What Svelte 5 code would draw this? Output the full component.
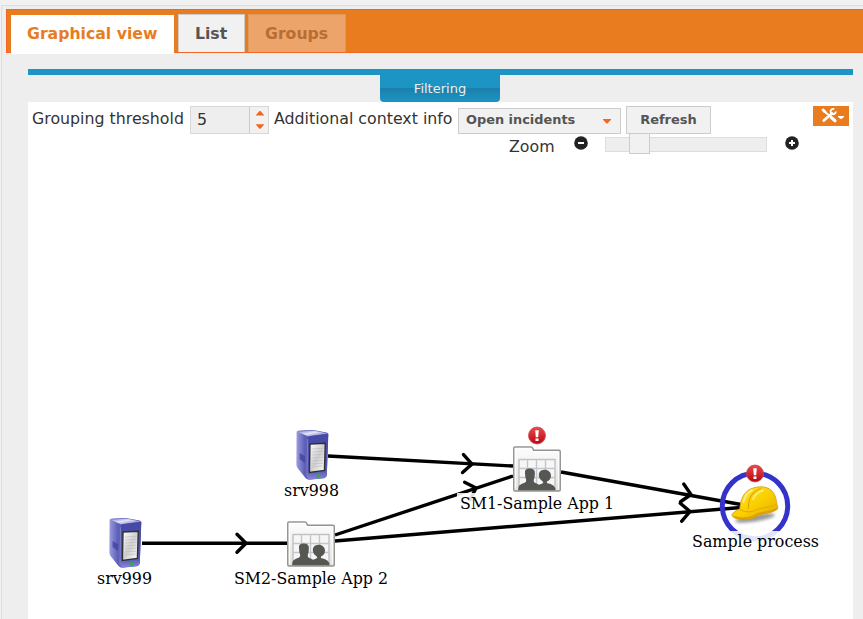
<script>
  const edges = [
    { d: 'M328 456 L513 466', tip: [472, 464], angle: 3.1 },
    { d: 'M335 535 L513 476', tip: [476, 488], angle: -18.3 },
    { d: 'M142 543.3 L287 543.3', tip: [246, 543.3], angle: 0 },
    { d: 'M561 472 L741 504.5', tip: [691, 494.5], angle: 10.2 },
    { d: 'M335 541 L741 507.5', tip: [690, 511.5], angle: -4.7 }
  ];
  const servers = [
    { x: 296, y: 430, name: 'srv998', tx: 284, ty: 496, w: 55 },
    { x: 109, y: 518, name: 'srv999', tx: 97, ty: 584, w: 55 }
  ];
  const apps = [
    { x: 513, y: 446, name: 'SM1-Sample App 1', tx: 460, ty: 509, w: 154 },
    { x: 287, y: 521, name: 'SM2-Sample App 2', tx: 234, ty: 584, w: 154 }
  ];
  const alerts = [[537, 435.5], [755, 473.5]];
</script>

{#snippet label(n)}
  <rect x={n.tx - 3} y={n.ty - 16} width={n.w + 6} height="20" fill="#fff" fill-opacity=".87" />
  <text x={n.tx} y={n.ty} textLength={n.w} lengthAdjust="spacingAndGlyphs">{n.name}</text>
{/snippet}

<div class="page">
  <div class="frame">
    <nav class="tabs">
      <div class="tab active"><span>Graphical view</span></div>
      <div class="tab list"><span>List</span></div>
      <div class="tab groups"><span>Groups</span></div>
    </nav>
    <div class="filterbar"><div class="filter">Filtering</div></div>
    <main class="panel">
      <div class="tools">
        <span class="txt grouping">Grouping threshold</span>
        <div class="spinner">
          <span class="value">5</span>
          <span class="arrows">
            <svg width="8" height="18" viewBox="0 0 8 18"><path d="M0 4.5V4L3.5 0H4.5L8 4V4.5zM0 13.2H8V13.7L4.5 17.7H3.5L0 13.7z" fill="#f26522" /></svg>
          </span>
        </div>
        <span class="txt context">Additional context info</span>
        <div class="select"><span>Open incidents</span><svg width="8" height="5" viewBox="0 0 8 5"><path d="M0 0H8V.7L4.5 4.5H3.5L0 .7z" fill="#f26522" /></svg></div>
        <div class="button">Refresh</div>
        <div class="menu">
          <svg width="36" height="20" viewBox="0 0 36 20">
            <g fill="none" stroke="#fff">
              <path d="M12 6L22 14.5" stroke-width="2" />
              <path d="M18.3 11.6L22 14.7" stroke-width="3.2" stroke-linecap="round" />
              <path d="M10.8 14.6L19 7.4" stroke-width="2.7" stroke-linecap="round" />
              <path d="M21.3 3.2A2.6 2.6 0 1 0 22.8 5.6" stroke-width="1.9" />
            </g>
            <path d="M8.3 3.7L10.2 2.2L13.5 5.2L12.5 7.2L10.4 6.6z" fill="#fff" />
            <path d="M25 10H31V11L28.5 13H27.5L25 11z" fill="#fff" />
          </svg>
        </div>
      </div>
      <div class="zoom">
        <span class="txt zlabel">Zoom</span>
        <svg class="minus" width="14" height="14" viewBox="0 0 14 14"><circle cx="7" cy="7" r="6.8" fill="#222" /><path d="M4 7H10" stroke="#fff" stroke-width="2" /></svg>
        <div class="slider"><div class="handle"></div></div>
        <svg class="plus" width="14" height="14" viewBox="0 0 14 14"><circle cx="7" cy="7" r="6.8" fill="#222" /><path d="M4 7H10M7 4V10" stroke="#fff" stroke-width="2" /></svg>
      </div>
      <svg class="graph" width="825" height="459" viewBox="28 160 825 459">
        <defs>
          <linearGradient id="side"><stop offset="0" stop-color="#9a9ce0" /><stop offset=".25" stop-color="#5f61b8" /><stop offset="1" stop-color="#5052ae" /></linearGradient>
          <linearGradient id="front" x2="0" y2="1"><stop offset="0" stop-color="#4649a3" /><stop offset=".8" stop-color="#5558b5" /><stop offset="1" stop-color="#8587d8" /></linearGradient>
          <linearGradient id="top" x2="1" y2="1"><stop offset="0" stop-color="#8082cc" /><stop offset=".45" stop-color="#e4e5fa" /><stop offset="1" stop-color="#5557ad" /></linearGradient>
          <linearGradient id="paper" x2="1" y2="1"><stop offset="0" stop-color="#fff" /><stop offset=".5" stop-color="#cfcfcf" /><stop offset="1" stop-color="#fff" /></linearGradient>
          <linearGradient id="folder" x2="0" y2="1"><stop offset="0" stop-color="#fdfdfd" /><stop offset="1" stop-color="#e2e2e0" /></linearGradient>
          <linearGradient id="red" x2="0" y2="1"><stop offset="0" stop-color="#e84a4a" /><stop offset="1" stop-color="#b90614" /></linearGradient>
          <linearGradient id="yellow" x2="1" y2="1"><stop offset="0" stop-color="#ffe53a" /><stop offset=".5" stop-color="#fbd000" /><stop offset="1" stop-color="#e3ab00" /></linearGradient>
          <filter id="soft" x="-20%" y="-80%" width="140%" height="260%"><feGaussianBlur stdDeviation="1.8" /></filter>
        </defs>

        <g fill="none" stroke="#000" stroke-width="3.4">
          {#each edges as e}
            <path d={e.d} />
            <path d="M-9 -9L0 0L-9 9" stroke-linecap="round" transform="translate({e.tip[0]} {e.tip[1]}) rotate({e.angle})" />
          {/each}
        </g>
        <circle cx="755" cy="506" r="32.7" fill="none" stroke="#3333cc" stroke-width="5" />

        {#each servers as s}
          <g transform="translate({s.x} {s.y})">
            <path d="M.6 2Q.8 1 3 .6L17 0L30.5 2.4Q33 3.2 32.3 5.5L30.8 45Q30.6 47.6 28 48.2L13 49.8Q11 49.8 9.5 48L1.5 38Q.3 36.5 .4 34z" fill="url(#side)" />
            <path d="M1.5 1.7L17 .4L32 3.5L12.5 6.4z" fill="url(#top)" />
            <path d="M11.5 8Q12 6.2 14 5.9L32.2 3.9L30.8 45Q30.5 47.7 28 48L14 49.5Q11.5 49.3 11.3 47z" fill="url(#front)" />
            <path d="M11.6 9L11 47" stroke="#8587cf" stroke-width=".8" />
            <path d="M3.6 23L9 26V33L3.6 29z" fill="#42459b" opacity=".8" />
            <path d="M14 14L29.3 13.2L28.4 40.5L13.4 42.5z" fill="url(#paper)" stroke="#303030" stroke-width="1.4" />
            <path d="M16 19L27.5 18.3M16 22L27.5 21.3M16 25L27.3 24.3M16 28L27 27.3M16 31L27 30.3M16 34L27 33.2M16 37L26.5 36" stroke="#b5b5b5" stroke-width=".5" />
            <circle cx="22.8" cy="45.8" r="1.9" fill="#31ad42" />
          </g>
          {@render label(s)}
        {/each}

        {#each apps as a}
          <g transform="translate({a.x} {a.y})">
            <path d="M.8 44V2Q.8 .9 2 .9H18Q19.2 .9 19.6 2L20.5 4.2H46Q47.2 4.2 47.2 5.4V44Q47.2 45 46 45H2Q.8 45 .8 44z" fill="url(#folder)" stroke="#92928e" stroke-width="1.5" />
            <path d="M2.3 43.4V2.4H18L19.3 5.7H45.7V43.4" fill="none" stroke="#fff" stroke-width="1" />
            <rect x="6" y="13.5" width="36" height="29.5" fill="#f6f6f6" stroke="#bfc0c4" stroke-width="1.4" />
            <path d="M14.5 13V43M23.5 13V43M32.5 13V43M6 22.5H42M6 31.5H42" stroke="#c5c6cc" stroke-width="1.4" />
            <path d="M5.2 44.3C5.2 38.5 7.5 38.6 11.7 36.8Q13.6 35.8 13.2 34Q12 31.5 12 27C11.8 23.5 13.5 22.5 17 22.5Q22 22.6 21.9 27Q21.8 32 20.8 34Q20.3 36.2 23 37.3L26.2 38.8L30.3 36.9L29.5 35.2C26.2 33.2 25.4 29.8 26 27.3C27 24.5 29 23.7 31.7 23.7C35.2 23.7 38 26.2 38 29.7Q37.8 33.8 34.1 35.5L33.8 37.1Q42.5 38.4 42.5 44.3z" fill="#555852" />
          </g>
          {@render label(a)}
        {/each}

        <ellipse cx="755" cy="518" rx="20" ry="3.6" fill="#555" opacity=".6" filter="url(#soft)" transform="rotate(-9 755 518)" />
        <path d="M739.8 509C740.3 500 743.5 492.5 750.5 489C758 485.7 767 485.8 772 491C775.7 495 776.3 500 777 505C778.5 507.5 777.8 509.5 775.5 510.5C770 513.5 764 513.6 758.5 515C753 519.5 744 520.8 735.5 518.3C731.5 516.8 731.2 514.8 733.2 512.8Q736 510.3 739.8 509z" fill="url(#yellow)" stroke="#c99b18" stroke-width=".8" />
        <path d="M732.5 515C740 518.8 750 518 757.3 513C764 511 771 511.3 777.2 507.3L776.5 509.8C770 513 764 513.4 758.5 514.8C753 519.3 743 520.3 735.5 518z" fill="#dba207" />
        <path d="M739.8 509.5C746 512.5 753 512 757.5 509.5C764 507.3 770 507.5 776 504.5" fill="none" stroke="#e7ad00" stroke-width="1.2" />
        <path d="M748.5 509C748 499 752 491.5 761 488.3" fill="none" stroke="#dca900" stroke-width="1.2" />
        <path d="M743.5 502C745 495 748 491.8 752 490.3M753 499Q756 492.5 763 490.7" fill="none" stroke="#fff5a3" stroke-width="1.8" stroke-linecap="round" opacity=".75" />
        {@render label({ name: 'Sample process', tx: 692, ty: 547, w: 127 })}

        {#each alerts as p}
          <g transform="translate({p[0]} {p[1]})">
            <circle r="8.5" fill="url(#red)" stroke="#cf4a4a" stroke-width=".8" />
            <path d="M-1.8 -5.3H1.8L1.2 1.8H-1.2zM-1.5 3H1.5V5.5H-1.5z" fill="#fff" />
          </g>
        {/each}
      </svg>
    </main>
  </div>
</div>

<style>
  :global(body) { margin: 0; overflow: hidden; background: #f0f0f0; }
  .page { box-sizing: border-box; width: 863px; height: 619px; padding: 5px 0 0 1px; background: #f1f1f1; overflow: hidden; font-family: "DejaVu Sans", sans-serif; color: #333; }
  .frame { box-sizing: border-box; height: 614px; border: 1px solid #ddd; border-width: 1px 0 0 1px; padding: 3px 0 0 4px; background: #eee; }
  .tabs { box-sizing: border-box; height: 44px; background: #e87c1e; border: 1px solid #f26522; border-right: 0; display: flex; padding: 4px 0 0 4px; font-weight: bold; font-size: 15.7px; }
  .tab { box-sizing: border-box; height: 38px; line-height: 38px; white-space: nowrap; }
  .tab span { display: block; }
  .active { width: 163px; height: 39px; margin-top: 1px; line-height: 38px; background: #fff; color: #e87c1e; padding-left: 16px; }
  .list { width: 67px; margin-left: 4px; border: 1px solid #ccc; border-bottom: 0; background: #f1f1f1; color: #555; padding-left: 16px; }
  .groups { width: 98px; margin-left: 3px; border: 1px solid #dc9a60; border-bottom: 0; background: #eca46a; color: #b86e31; padding-left: 16px; }
  .filterbar { height: 27px; width: 825px; margin: 16px 0 0 22px; border-top: 6px solid #1c94c4; display: flex; justify-content: center; }
  .filter { width: 120px; margin-right: 1px; height: 27px; line-height: 27px; text-align: center; font-size: 13px; color: #eee; border-radius: 0 0 4px 4px; background: linear-gradient(#1c94c4 0, #1c94c4 13px, #1a80ab 13px, #1c94c4 27px); }
  .panel { width: 825px; height: 517px; margin-left: 22px; background: #fff; }
  .tools { height: 32px; display: flex; align-items: flex-start; padding-top: 4px; box-sizing: border-box; }
  .txt { font-size: 15.8px; line-height: 26px; white-space: nowrap; }
  .grouping { width: 158px; margin-left: 4px; }
  .spinner { box-sizing: border-box; width: 79px; height: 28px; border: 1px solid #d8d8d8; background: #eee; display: flex; }
  .value { width: 59px; box-sizing: border-box; padding-left: 6px; border-right: 1px solid #ccc; font-size: 15.8px; line-height: 26px; }
  .arrows { flex: 1; background: #f1f1f1; display: flex; justify-content: center; padding: 4px 0 0 1px; }
  .context { width: 184px; margin-left: 5px; }
  .select { box-sizing: border-box; width: 163px; height: 26px; margin-top: 2px; border: 1px solid #ccc; background: #f1f1f1; display: flex; justify-content: space-between; align-items: center; padding: 0 9px 0 7px; font-size: 12.9px; font-weight: bold; color: #555; line-height: 22px; }
  .select span { margin-top: -3px; }
  .button { box-sizing: border-box; width: 85px; height: 28px; margin-left: 5px; border: 1px solid #ccc; background: #f1f1f1; text-align: center; font-size: 13px; font-weight: bold; color: #555; line-height: 26px; }
  .menu { width: 36px; height: 20px; margin-left: 102px; background: #e87c1e; }
  .menu svg, .graph { display: block; }
  .zoom { height: 26px; display: flex; align-items: flex-start; }
  .zlabel { width: 65px; margin-left: 481px; }
  .minus { margin-top: 2px; }
  .slider { box-sizing: border-box; width: 162px; height: 15px; margin: 3px 18px 0 17px; border: 1px solid #ddd; background: #eee; position: relative; }
  .handle { box-sizing: border-box; position: absolute; left: 23px; top: -5px; width: 21px; height: 21px; border: 1px solid #ccc; background: #f1f1f1; }
  .plus { margin-top: 2px; }
  .graph text { font-family: "DejaVu Serif", serif; font-stretch: condensed; font-size: 16px; fill: #000; }
</style>
